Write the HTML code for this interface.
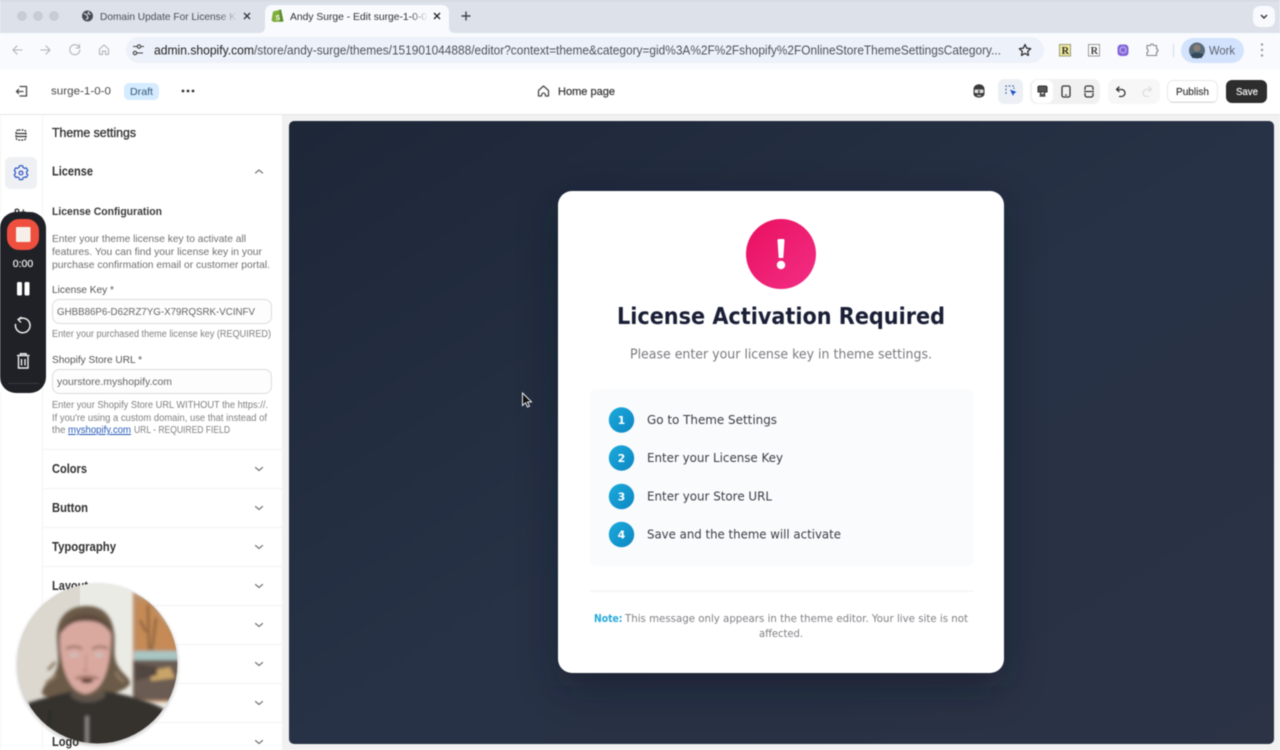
<!DOCTYPE html>
<html><head><meta charset="utf-8"><title>Andy Surge - Edit surge-1-0-0</title>
<style>
html,body{margin:0;padding:0;width:1280px;height:750px;overflow:hidden;background:#fff}
svg{display:block}
text{font-family:"Liberation Sans",sans-serif}
.root{filter:blur(.45px)}
.ic{fill:none;stroke:#4a4a4a;stroke-width:1.3;stroke-linecap:round;stroke-linejoin:round}
.m{font-family:"DejaVu Sans","Liberation Sans",sans-serif}
.h{font-size:12.500px;font-weight:700;fill:#303030}
.d{font-size:10px;fill:#808080}
.chev{fill:none;stroke:#777;stroke-width:1.200;stroke-linecap:round;stroke-linejoin:round}
.div{fill:#f4f4f4}
</style></head><body>
<svg width="1280" height="750" viewBox="0 0 1280 750" xmlns="http://www.w3.org/2000/svg">
<defs>
<linearGradient id="bg" x1="0" y1="0" x2="1" y2="1"><stop offset="0" stop-color="#1d2738"/><stop offset=".5" stop-color="#283246"/><stop offset="1" stop-color="#2b3345"/></linearGradient>
<linearGradient id="pink" x1="0" y1="0" x2="1" y2="1"><stop offset="0" stop-color="#ea0f60"/><stop offset="1" stop-color="#f22f85"/></linearGradient>
<linearGradient id="blue" x1="0" y1="0" x2="1" y2="1"><stop offset="0" stop-color="#1cabdc"/><stop offset="1" stop-color="#0c86c2"/></linearGradient>
<linearGradient id="fade" x1="0" y1="0" x2="1" y2="0"><stop offset="0" stop-color="#dde1ea" stop-opacity="0"/><stop offset="1" stop-color="#dde1ea"/></linearGradient>
<linearGradient id="fade2" x1="0" y1="0" x2="1" y2="0"><stop offset="0" stop-color="#f8fafd" stop-opacity="0"/><stop offset="1" stop-color="#f8fafd"/></linearGradient>
<filter id="sh" x="-30%" y="-30%" width="160%" height="160%"><feGaussianBlur stdDeviation="20"/></filter>
<filter id="soft" x="-20%" y="-20%" width="140%" height="140%"><feGaussianBlur stdDeviation="1.600"/></filter>
<filter id="soft2" x="-20%" y="-20%" width="140%" height="140%"><feGaussianBlur stdDeviation="3"/></filter>
<clipPath id="cam"><circle cx="97.500" cy="663.500" r="80"/></clipPath>
<clipPath id="canvas"><rect x="289" y="121" width="985" height="623" rx="5"/></clipPath>
</defs>
<g class="root">
<!-- Browser tab bar -->
<rect width="1280" height="33" fill="#dde1ea"/>
<rect width="1280" height="1" fill="#c9cdd6"/>
<circle cx="22" cy="16" r="5" fill="#c9ccd4"/><circle cx="38" cy="16" r="5" fill="#c9ccd4"/><circle cx="54" cy="16" r="5" fill="#c9ccd4"/>
<circle cx="87.500" cy="16" r="5.500" fill="#474b52"/><path d="M84 13.500l3 1.500 1 3-2 1.500M89 11.500l-1 2 2.500 1" fill="none" stroke="#dde1ea" stroke-width="1.100"/>
<text x="100" y="20" font-size="10.500" fill="#4a4d55" textLength="136" lengthAdjust="spacingAndGlyphs">Domain Update For License K</text>
<rect x="218" y="6" width="20" height="20" fill="url(#fade)"/>
<path d="M244 13l6 6M250 13l-6 6" stroke="#333" stroke-width="1.300" fill="none"/>
<path d="M258 33c5 0 7-2 7-6V12c0-4 3-7 7-7h170c4 0 7 3 7 7v15c0 4 2 6 7 6z" fill="#f8fafd"/>
<path d="M273 11.500l8-2 2.500 12-10 .5-2-1.500z" fill="#7fae3c"/><path d="M279.500 9.600l1.500-.100 2.500 12-4 .2z" fill="#5a8e2a"/>
<text x="275.500" y="20" font-size="7" font-weight="700" fill="#fff">S</text>
<text x="290" y="20" font-size="10.500" fill="#2e3138" textLength="137" lengthAdjust="spacingAndGlyphs">Andy Surge - Edit surge-1-0-0</text>
<rect x="410" y="6" width="18" height="20" fill="url(#fade2)"/>
<path d="M434 13l6 6M440 13l-6 6" stroke="#222" stroke-width="1.300" fill="none"/>
<path d="M466 11.500v9M461.500 16h9" stroke="#444" stroke-width="1.400" fill="none"/>
<rect x="1253" y="6" width="22" height="21" rx="7" fill="#f8fafd"/>
<path d="M1261 15l3 3 3-3" fill="none" stroke="#333" stroke-width="1.400"/>
<!-- Toolbar -->
<rect y="33" width="1280" height="36" fill="#f8fafd"/>
<g fill="none" stroke="#b0b3b9" stroke-width="1.100" stroke-linecap="round" stroke-linejoin="round">
<path d="M22 50H13M17 46l-4 4 4 4"/><path d="M41 50h9M46 46l4 4-4 4"/>
<path d="M79 47a5 5 0 1 0 .8 3M79.500 44.500V48h-3.500"/><path d="M99.500 49l4.500-4 4.500 4v5.500h-3v-3.500h-3v3.500h-3z"/>
</g>
<rect x="126" y="37" width="918" height="26" rx="13" fill="#edf2fa"/>
<g fill="none" stroke="#444" stroke-width="1.100"><path d="M133 46.500h4M141 46.500h3M137 53h6"/><circle cx="139" cy="46.500" r="1.700"/><circle cx="135" cy="53" r="1.700"/></g>
<text y="54.500" font-size="12.500" fill="#1f1f1f" x="154" textLength="100" lengthAdjust="spacingAndGlyphs">admin.shopify.com</text>
<text y="54.500" font-size="12.500" fill="#4f5258" x="254" textLength="747" lengthAdjust="spacingAndGlyphs">/store/andy-surge/themes/151901044888/editor?context=theme&amp;category=gid%3A%2F%2Fshopify%2FOnlineStoreThemeSettingsCategory...</text>
<path d="M1025 44.500l1.700 3.700 4 .5-3 2.700.8 4-3.500-2-3.500 2 .8-4-3-2.700 4-.5z" fill="none" stroke="#333" stroke-width="1.300" stroke-linejoin="round"/>
<rect x="1059.500" y="44.500" width="11" height="11.500" fill="#f2ec9b" stroke="#9b9b7c"/>
<text x="1061.500" y="54" font-size="10.500" font-weight="700" fill="#333" style="font-family:'Liberation Serif',serif">R</text>
<rect x="1088.500" y="44.500" width="11" height="11.500" fill="#fff" stroke="#999"/>
<text x="1090.500" y="54" font-size="10.500" font-weight="700" fill="#444" style="font-family:'Liberation Serif',serif">R</text>
<rect x="1117.500" y="44.500" width="11" height="11.500" rx="3.500" fill="#8366d8"/><circle cx="1123" cy="50" r="3" fill="none" stroke="#c9bbf2" stroke-width="1"/>
<path d="M1147 45.500h3.500c0-2 3-2 3 0h3v3.500c2 0 2 3 0 3v3.500h-9.500v-3c1.500 0 1.500-3.500 0-3.500z" fill="none" stroke="#888" stroke-width="1.100"/>
<rect x="1173" y="44" width="1" height="13" fill="#d5dde9"/>
<rect x="1181" y="38" width="63" height="25" rx="12.500" fill="#d3e3fd"/>
<circle cx="1197" cy="50.500" r="8" fill="#5a6b78"/><circle cx="1197" cy="48" r="3.500" fill="#8a7f78"/><path d="M1190.500 55c2-3 11-3 13 0l-2 3h-9z" fill="#33495c"/>
<text x="1209" y="54.500" font-size="11.500" fill="#5c6270" textLength="26" lengthAdjust="spacingAndGlyphs">Work</text>
<circle cx="1262" cy="44.500" r="1.200" fill="#999"/><circle cx="1262" cy="50" r="1.200" fill="#999"/><circle cx="1262" cy="55.500" r="1.200" fill="#999"/>
<!-- Editor header -->
<rect y="69" width="1280" height="45" fill="#fff"/>
<rect y="114" width="1280" height="1.500" fill="#e6e6e6"/>
<path class="ic" d="M20 86.500h6.500v9.500H20M23 91.500h-6.500M18.500 89.500l-2 2 2 2"/>
<text x="51" y="94.500" font-size="11" fill="#4a4a4a" textLength="60" lengthAdjust="spacingAndGlyphs">surge-1-0-0</text>
<rect x="124" y="83" width="35" height="17" rx="5" fill="#d5ebff"/>
<text x="130" y="95" font-size="10.500" fill="#33587a" textLength="23" lengthAdjust="spacingAndGlyphs">Draft</text>
<circle cx="183" cy="91" r="1.400" fill="#333"/><circle cx="188" cy="91" r="1.400" fill="#333"/><circle cx="193" cy="91" r="1.400" fill="#333"/>
<path class="ic" d="M538.500 90.500l5-4.500 5 4.500v5.500h-3c0-4-4-4-4 0h-3z"/>
<text x="558" y="95" font-size="11" fill="#333" stroke="#333" stroke-width=".2" textLength="57" lengthAdjust="spacingAndGlyphs">Home page</text>
<!-- right header controls -->
<path d="M973.500 89.500c0-7 11-7 11 0v4c0 5.500-11 5.500-11 0z" fill="#3a3a3a"/>
<rect x="974.500" y="89.500" width="9" height="3.600" rx="1.200" fill="#ddd"/>
<rect x="978.400" y="90" width="1.200" height="3" fill="#333"/>
<rect x="977" y="95" width="4" height="1.200" fill="#ccc"/>
<rect x="998" y="79" width="25" height="25" rx="6" fill="#ecf0f5"/>
<path d="M1006 94v-8h8v3" fill="none" stroke="#5a76b5" stroke-width="1.200" stroke-dasharray="2 1.500"/>
<path d="M1010 89.500l6.500 2.500-2.500 1.500-1 2.500z" fill="#1d4fd0"/>
<rect x="1030" y="79" width="70" height="25" rx="7" fill="#f1f1f1"/>
<rect x="1032" y="80" width="21" height="23" rx="6" fill="#fff"/>
<path d="M1038 87.500a1.500 1.500 0 0 1 1.500-1.500h6a1.500 1.500 0 0 1 1.500 1.500v4.500h-9z" fill="#555" stroke="#333" stroke-width="1.100"/>
<path d="M1040.500 92v2.500h4V92M1039.500 96h6" fill="none" stroke="#333" stroke-width="1.300"/>
<rect x="1062" y="86" width="8" height="11" rx="1.500" fill="none" stroke="#333" stroke-width="1.300"/><path d="M1065 95h2" stroke="#333"/>
<path d="M1085 90v-2a2 2 0 0 1 2-2h4a2 2 0 0 1 2 2v2M1085 93v2a2 2 0 0 0 2 2h4a2 2 0 0 0 2-2v-2M1084 91.500h10" fill="none" stroke="#333" stroke-width="1.300"/>
<rect x="1108" y="79" width="52" height="25" rx="7" fill="#f7f7f7"/>
<path class="ic" d="M1119 87l-2.500 2.500 2.500 2M1116.500 89.500h5a3 3 0 0 1 0 7h-2" style="stroke:#333"/>
<path class="ic" d="M1149 87l2.500 2.500-2.500 2M1151.500 89.500h-5a3 3 0 0 0 0 7h2" style="stroke:#dedede"/>
<rect x="1167.500" y="80.500" width="50" height="22" rx="6" fill="#fff" stroke="#e8e8e8"/>
<rect x="1170" y="101.500" width="45" height="1.200" fill="#dcdcdc"/>
<text x="1176" y="95" font-size="10.500" fill="#333" stroke="#333" stroke-width=".15" textLength="33" lengthAdjust="spacingAndGlyphs">Publish</text>
<rect x="1226" y="80" width="41" height="23" rx="6" fill="#2d2d2d"/>
<text x="1236" y="95" font-size="10.500" fill="#fff" stroke="#fff" stroke-width=".15" textLength="22" lengthAdjust="spacingAndGlyphs">Save</text>
<!-- Body backgrounds -->
<rect y="115" width="42" height="635" fill="#fff"/>
<rect x="42" y="115" width="1" height="635" fill="#f4f4f4"/>
<rect x="43" y="115" width="239" height="635" fill="#fff"/>
<rect x="282" y="115" width="998" height="635" fill="#f1f1f1"/>
<rect x="289" y="121" width="985" height="623" rx="5" fill="url(#bg)"/>
<!-- Card -->
<g clip-path="url(#canvas)"><rect x="558" y="205" width="446" height="482" rx="14" fill="#0f1520" opacity=".5" filter="url(#sh)"/></g>
<rect x="558" y="191" width="446" height="482" rx="14" fill="#fff"/>
<circle cx="781" cy="254" r="35" fill="url(#pink)"/>
<path d="M777.500 240.500a1.500 1.500 0 0 1 1.500-1.500h4a1.500 1.500 0 0 1 1.500 1.500l-1.200 17.500h-4.600z" fill="#fff"/>
<circle cx="781" cy="265" r="4.200" fill="#fff"/>
<text x="617" y="324" class="m" font-size="23" font-weight="700" fill="#1a1f36" textLength="328" lengthAdjust="spacingAndGlyphs">License Activation Required</text>
<text x="630" y="358.500" class="m" font-size="13" fill="#7a7a7f" textLength="302" lengthAdjust="spacingAndGlyphs">Please enter your license key in theme settings.</text>
<rect x="590" y="389" width="383" height="177" rx="6" fill="#fafbfd"/>
<g>
<circle cx="621.500" cy="420" r="12.700" fill="url(#blue)"/><text x="621.500" y="424" text-anchor="middle" class="m" font-size="11" font-weight="700" fill="#fff">1</text>
<circle cx="621.500" cy="458" r="12.700" fill="url(#blue)"/><text x="621.500" y="462" text-anchor="middle" class="m" font-size="11" font-weight="700" fill="#fff">2</text>
<circle cx="621.500" cy="496.500" r="12.700" fill="url(#blue)"/><text x="621.500" y="500.500" text-anchor="middle" class="m" font-size="11" font-weight="700" fill="#fff">3</text>
<circle cx="621.500" cy="534.500" r="12.700" fill="url(#blue)"/><text x="621.500" y="538.500" text-anchor="middle" class="m" font-size="11" font-weight="700" fill="#fff">4</text>
</g>
<text x="647" y="424" class="m" font-size="12.500" fill="#3a3d45" textLength="130" lengthAdjust="spacingAndGlyphs">Go to Theme Settings</text>
<text x="647" y="462" class="m" font-size="12.500" fill="#3a3d45" textLength="136" lengthAdjust="spacingAndGlyphs">Enter your License Key</text>
<text x="647" y="500.500" class="m" font-size="12.500" fill="#3a3d45" textLength="125" lengthAdjust="spacingAndGlyphs">Enter your Store URL</text>
<text x="647" y="538.500" class="m" font-size="12.500" fill="#3a3d45" textLength="194" lengthAdjust="spacingAndGlyphs">Save and the theme will activate</text>
<rect x="590" y="590.500" width="383" height="1.500" fill="#f3f4f6"/>
<text x="594" y="622" class="m" font-size="11" font-weight="700" fill="#25a9d8" textLength="28.500" lengthAdjust="spacingAndGlyphs">Note:</text>
<text x="625" y="622" class="m" font-size="11" fill="#808085" textLength="343" lengthAdjust="spacingAndGlyphs">This message only appears in the theme editor. Your live site is not</text>
<text x="759" y="637" class="m" font-size="11" fill="#808085" textLength="44" lengthAdjust="spacingAndGlyphs">affected.</text>
<!-- Cursor -->
<path d="M522.500 393v12.500l3-2.800 2 4.300 2-.9-2-4.200h4z" fill="#111" stroke="#fff" stroke-width=".9"/>
<!-- Rail icons -->
<g fill="none" stroke="#333" stroke-width="1.200"><rect x="16" y="130" width="10" height="10" rx="2.500" stroke-dasharray="2 1"/><path d="M15.500 133.500h11M15.500 136.500h11"/></g>
<rect x="5" y="157" width="32" height="32" rx="6" fill="#eef0f3"/>
<circle cx="21" cy="173" r="1.900" fill="none" stroke="#2c55c4" stroke-width="1.200"/>
<path d="M19.500 167.500h3l.5 1.700 1.600.9 1.700-.4 1.500 2.600-1.200 1.200v1.900l1.200 1.200-1.500 2.600-1.700-.4-1.600.9-.5 1.700h-3l-.5-1.700-1.600-.9-1.700.4-1.500-2.600 1.200-1.200v-1.900l-1.200-1.200 1.500-2.600 1.700.4 1.600-.9z" transform="translate(0 -1.800)" fill="none" stroke="#2c55c4" stroke-width="1.200" stroke-linejoin="round"/>
<text x="14" y="216" font-size="11" font-weight="700" fill="#333">9+</text>
<!-- Sidebar text -->
<text x="52" y="137" font-size="12.500" fill="#303030" stroke="#303030" stroke-width=".3" textLength="84" lengthAdjust="spacingAndGlyphs">Theme settings</text>
<text x="52" y="175.500" class="h" textLength="41" lengthAdjust="spacingAndGlyphs">License</text>
<path class="chev" d="M255.500 173l3.500-3 3.500 3"/>
<text x="52" y="215" font-size="11" font-weight="700" fill="#3a3a3a" textLength="110" lengthAdjust="spacingAndGlyphs">License Configuration</text>
<text x="52" y="242" font-size="10.500" fill="#707070" textLength="194" lengthAdjust="spacingAndGlyphs">Enter your theme license key to activate all</text>
<text x="52" y="255" font-size="10.500" fill="#707070" textLength="210" lengthAdjust="spacingAndGlyphs">features. You can find your license key in your</text>
<text x="52" y="268" font-size="10.500" fill="#707070" textLength="218" lengthAdjust="spacingAndGlyphs">purchase confirmation email or customer portal.</text>
<text x="52" y="293" font-size="10.500" fill="#555" textLength="62" lengthAdjust="spacingAndGlyphs">License Key *</text>
<rect x="52.500" y="299.500" width="219" height="24" rx="7" fill="#fdfdfd" stroke="#dcdcdc"/>
<text x="57" y="315" font-size="10" fill="#666" textLength="198" lengthAdjust="spacingAndGlyphs">GHBB86P6-D62RZ7YG-X79RQSRK-VCINFV</text>
<text x="52" y="337" class="d" textLength="219" lengthAdjust="spacingAndGlyphs">Enter your purchased theme license key (REQUIRED)</text>
<text x="52" y="363" font-size="10.500" fill="#555" textLength="90" lengthAdjust="spacingAndGlyphs">Shopify Store URL *</text>
<rect x="52.500" y="369.500" width="219" height="24" rx="7" fill="#fdfdfd" stroke="#dcdcdc"/>
<text x="57" y="385" font-size="10.500" fill="#666" textLength="115" lengthAdjust="spacingAndGlyphs">yourstore.myshopify.com</text>
<text x="52" y="408" class="d" textLength="216" lengthAdjust="spacingAndGlyphs">Enter your Shopify Store URL WITHOUT the https://.</text>
<text x="52" y="421" class="d" textLength="215" lengthAdjust="spacingAndGlyphs">If you're using a custom domain, use that instead of</text>
<text x="52" y="433" class="d" textLength="13.500" lengthAdjust="spacingAndGlyphs">the</text>
<text x="68" y="433" font-size="10" fill="#2558b8" text-decoration="underline" textLength="63" lengthAdjust="spacingAndGlyphs">myshopify.com</text>
<text x="134" y="433" class="d" textLength="96" lengthAdjust="spacingAndGlyphs">URL - REQUIRED FIELD</text>
<!-- Accordions -->
<g>
<rect x="43" y="449" width="239" height="1.200" class="div"/>
<rect x="43" y="488" width="239" height="1.200" class="div"/>
<rect x="43" y="527" width="239" height="1.200" class="div"/>
<rect x="43" y="566" width="239" height="1.200" class="div"/>
<rect x="43" y="605" width="239" height="1.200" class="div"/>
<rect x="43" y="644" width="239" height="1.200" class="div"/>
<rect x="43" y="683" width="239" height="1.200" class="div"/>
<rect x="43" y="722" width="239" height="1.200" class="div"/>
</g>
<text x="52" y="473" class="h" textLength="35" lengthAdjust="spacingAndGlyphs">Colors</text>
<text x="52" y="512" class="h" textLength="36" lengthAdjust="spacingAndGlyphs">Button</text>
<text x="52" y="551" class="h" textLength="64" lengthAdjust="spacingAndGlyphs">Typography</text>
<text x="52" y="590" class="h" textLength="36" lengthAdjust="spacingAndGlyphs">Layout</text>
<text x="52" y="746" class="h" textLength="27" lengthAdjust="spacingAndGlyphs">Logo</text>
<path class="chev" d="M255.500 467.500l3.500 3 3.500-3M255.500 506.500l3.500 3 3.500-3M255.500 545.500l3.500 3 3.500-3M255.500 584.500l3.500 3 3.500-3M255.500 623.500l3.500 3 3.500-3M255.500 662.500l3.500 3 3.500-3M255.500 701.500l3.500 3 3.500-3M255.500 740.500l3.500 3 3.500-3"/>
<!-- Recorder -->
<rect x="0" y="212" width="46" height="181" rx="16" fill="#1f2127"/>
<rect x="7" y="219" width="32" height="31" rx="12" fill="#ee4f3e"/>
<rect x="16" y="227" width="14.500" height="15" rx="1" fill="#f6efe9"/>
<text x="23" y="267" text-anchor="middle" font-size="10.500" fill="#f0f0f0" stroke="#f0f0f0" stroke-width=".2">0:00</text>
<rect x="17" y="282" width="5" height="13.500" rx="1.500" fill="#fff"/><rect x="24.500" y="282" width="5" height="13.500" rx="1.500" fill="#fff"/>
<path d="M18.500 319.500a7.300 7.300 0 1 1-3 5" fill="none" stroke="#eee" stroke-width="1.500" stroke-linecap="round"/><path d="M21.500 317l-3.500 2.500 3 3" fill="none" stroke="#eee" stroke-width="1.300"/>
<path d="M17 355.500h12.500M20.500 355.500v-1.800h5.500v1.800M18.500 356.500v11.500h9.500v-11.500M21.500 359v6.500M25 359v6.500" fill="none" stroke="#f0f0f0" stroke-width="1.400"/>
<rect x="8" y="383" width="31" height="1" fill="#383b42"/>
<!-- Webcam -->
<circle cx="97.500" cy="665" r="81" fill="#000" opacity=".18" filter="url(#soft)"/>
<g clip-path="url(#cam)">
<rect x="15" y="582" width="165" height="165" fill="#dcd8d0"/>
<rect x="80" y="582" width="52" height="165" fill="#ebebe5"/>
<rect x="130" y="582" width="50" height="165" fill="#eeeae2"/>
<g filter="url(#soft)">
<path d="M133 592l20 10 26 38v62l-46 0z" fill="#b98f6a"/>
<path d="M136 600l12 2 10 14 12 14 8 20h-42z" fill="#c58a54"/>
<path d="M148 605l1 45M156 618l-4 32M140 620l6 12" stroke="#4f3b30" stroke-width="1.500" fill="none"/>
<rect x="134" y="651" width="44" height="9" fill="#a9c6c2"/>
<path d="M133 660h46v40h-46z" fill="#6b5b52"/>
<path d="M150 671l20-4 5 11-24 3z" fill="#c9a468"/>
<path d="M135 663l22 4v8l-22 6z" fill="#51463f"/>
</g>
<g filter="url(#soft)">
<path d="M42 692c4-12 12-14 15-24 3-10-1-24 0-36 2-18 14-26 30-26 16 0 25 10 27 26 2 12-2 24 4 34 4 8 13 12 12 18-6 8-16 8-28 14H60c-8-1-18 0-18-6z" fill="#6b5a47"/>
<path d="M46 684c4-6 8-4 10-10M124 682c-4-4-6-4-8-10M48 670c3-4 5-4 7-8" stroke="#8e7c63" stroke-width="3" fill="none"/>
<path d="M60 640c0-16 10-24 26-24 16 0 26 8 25 24-1 20-4 50-25 54-20-2-26-34-26-54z" fill="#d9a9a0"/>
<path d="M60 634c3-12 14-20 26-20 14 0 24 8 26 20-8-10-14-13-26-13s-18 3-26 13z" fill="#5e4c3c"/>
<path d="M66 649c5-3 12-3 16 0M92 649c5-3 12-3 16 0" stroke="#94705f" stroke-width="2.200" fill="none"/>
<ellipse cx="74" cy="655" rx="4.500" ry="2" fill="#cfc0bc"/><ellipse cx="99" cy="655" rx="4.500" ry="2" fill="#cfc0bc"/>
<path d="M86 655v13l-3 3h6" stroke="#bf8a80" stroke-width="1.500" fill="none"/>
<path d="M74 678c8-4 18-4 26 0-2 3-24 3-26 0z" fill="#a87b6b"/>
<ellipse cx="87" cy="681" rx="6" ry="2.200" fill="#5a3a35"/>
<path d="M28 703c18-6 34-9 44-12 6 8 24 8 32 0 14 2 42 8 60 18v40H28z" fill="#35322f"/>
<path d="M72 691c6 8 24 8 32 0l2 4c-6 10-30 10-36 0z" fill="#5b524c"/>
<rect x="85.500" y="716" width="3" height="30" fill="#8f8f8a"/>
<path d="M50 710l-2 34" stroke="#232120" stroke-width="1.500"/>
</g>
</g>
<rect x="0" y="115" width="1" height="97" fill="#f6f5ec"/>
<rect x="0" y="393" width="1" height="357" fill="#f6f5ec"/>
</g>
</svg>
</body></html>
